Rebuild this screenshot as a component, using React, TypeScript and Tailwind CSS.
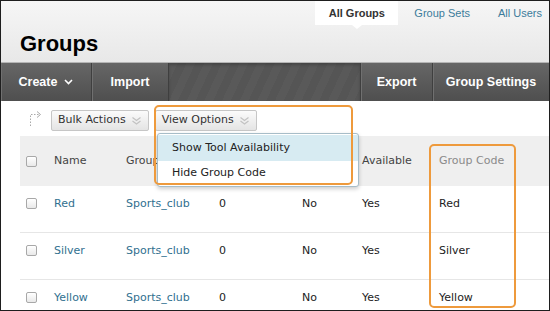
import React from "react";

function Checkbox() {
  return (
    <div className="w-[11px] h-[11px] rounded-[2px] border border-[#a8a8a8] bg-gradient-to-b from-white to-[#e9e9e9] shadow-[inset_0_1px_0_#fff]" />
  );
}

function DoubleChevron() {
  return (
    <svg width="11" height="10" viewBox="0 0 11 10" className="ml-[5px]">
      <polyline points="1.5,1.5 5.5,4.5 9.5,1.5" fill="none" stroke="#c2c2c2" strokeWidth="1.2" />
      <polyline points="1.5,5 5.5,8 9.5,5" fill="none" stroke="#c2c2c2" strokeWidth="1.2" />
    </svg>
  );
}

function ToolBtn({ children, w, last }: { children: React.ReactNode; w: string; last?: boolean }) {
  return (
    <div
      className={`${w} h-full flex items-center justify-center text-white font-bold text-[12.5px] font-['Liberation_Sans',Arial,sans-serif] bg-gradient-to-b from-[#666666] to-[#4f4f4f] ${last ? "" : "border-r border-r-[#3f3f3f]"} shadow-[inset_1px_0_0_#707070]`}
    >
      {children}
    </div>
  );
}

const rows = [
  { name: "Red", code: "Red" },
  { name: "Silver", code: "Silver" },
  { name: "Yellow", code: "Yellow" },
];

const cols = "grid grid-cols-[34px_72px_93px_83px_60px_77px_1fr]";

export default function App() {
  return (
    <div className="relative w-[550px] h-[311px] overflow-hidden border border-[#1e1e1e] bg-white font-['DejaVu_Sans',Verdana,sans-serif] text-[11px] text-[#222]">
      {/* Header */}
      <div className="h-[61px] flex justify-between bg-gradient-to-b from-[#f6f6f6] to-[#e8e8e8] font-['Liberation_Sans',Arial,sans-serif]">
        <div className="self-end pb-[7px] pl-[19px] text-[22px] font-bold text-black leading-none">Groups</div>
        <div className="flex items-start h-[24px] pr-[7px] text-[11px]">
          <div className="relative w-[83px] h-[24px] bg-white flex items-center justify-center font-bold text-[#333]">
            All Groups
            <div className="absolute left-1/2 -translate-x-1/2 top-[24px] w-0 h-0 border-l-[5px] border-r-[5px] border-t-[4px] border-l-transparent border-r-transparent border-t-white" />
          </div>
          <div className="ml-[16px] h-[24px] flex items-center text-[#3c7c9b]">Group Sets</div>
          <div className="ml-[28px] h-[24px] flex items-center text-[#3c7c9b]">All Users</div>
        </div>
      </div>

      {/* Toolbar */}
      <div className="h-[39px] flex border-t border-t-[#b5b5b5]">
        <ToolBtn w="w-[91px]">
          <span>Create</span>
          <svg width="9" height="6" viewBox="0 0 9 6" className="ml-[7px]">
            <polyline points="1,1 4.5,4.5 8,1" fill="none" stroke="#fff" strokeWidth="1.6" />
          </svg>
        </ToolBtn>
        <ToolBtn w="w-[77px]">Import</ToolBtn>
        <div className="flex-1 h-full border-r border-r-[#3f3f3f] bg-[image:repeating-linear-gradient(115deg,#595959_0px,#595959_8px,#555555_8px,#555555_16px)] shadow-[inset_0_2px_3px_rgba(0,0,0,0.2)]" />
        <ToolBtn w="w-[72px]">Export</ToolBtn>
        <ToolBtn w="w-[116px]" last>Group Settings</ToolBtn>
      </div>

      {/* Action bar */}
      <div className="h-[35px] flex items-start pt-[9px]">
        <svg width="16" height="18" viewBox="0 0 16 18" className="ml-[26px] mt-[-1px]">
          <path d="M3.5 17 V5.5 H12" fill="none" stroke="#a9a9a9" strokeWidth="1" strokeDasharray="1.5 1.5" />
          <polyline points="10,2.5 13.5,5.5 10,8.5" fill="none" stroke="#a9a9a9" strokeWidth="1" />
        </svg>
        <div className="ml-[8px] h-[21px] px-[6px] flex items-center rounded-[2px] border border-[#c6c6c6] bg-gradient-to-b from-[#fbfbfb] to-[#e4e4e4] text-[#333]">
          Bulk Actions
          <DoubleChevron />
        </div>
        <div className="ml-[6px] h-[21px] px-[6px] flex items-center rounded-[2px] border border-[#c6c6c6] bg-gradient-to-b from-[#fbfbfb] to-[#e4e4e4] text-[#333]">
          View Options
          <DoubleChevron />
        </div>
      </div>

      {/* Table */}
      <div className="ml-[19px]">
        <div className={`${cols} items-center h-[50px] bg-[#efefef] text-[#444]`}>
          <div className="pl-[6px]"><Checkbox /></div>
          <div>Name</div>
          <div className="w-[31px] overflow-hidden whitespace-nowrap">Group Set</div>
          <div />
          <div />
          <div>Available</div>
          <div className="text-[#8a8a8a]">Group Code</div>
        </div>
        {rows.map((r) => (
          <div key={r.name} className={`${cols} items-start pt-[9px] leading-[18px] h-[47px] border-b border-b-[#e6e6e6]`}>
            <div className="pl-[6px] pt-[3px]"><Checkbox /></div>
            <div className="text-[#31708f]">{r.name}</div>
            <div className="text-[#31708f]">Sports_club</div>
            <div>0</div>
            <div>No</div>
            <div>Yes</div>
            <div>{r.code}</div>
          </div>
        ))}
      </div>

      {/* Dropdown menu */}
      <div className="absolute left-[156px] top-[132px] w-[202px] h-[54px] bg-white border border-[#a7bdc8] rounded-[3px] shadow-[0_2px_4px_rgba(0,0,0,0.2)] py-[1px]">
        <div className="h-[26px] bg-[#d7ebf2] flex items-center pl-[14px] text-[#222]">Show Tool Availability</div>
        <div className="h-[24px] flex items-center pl-[14px] text-[#222]">Hide Group Code</div>
      </div>

      {/* Orange highlights */}
      <div className="absolute left-[153px] top-[104px] w-[199px] h-[80px] border-2 border-[#ee9a3c] rounded-[5px]" />
      <div className="absolute left-[428px] top-[143px] w-[87px] h-[164px] border-2 border-[#ee9a3c] rounded-[5px]" />
    </div>
  );
}
